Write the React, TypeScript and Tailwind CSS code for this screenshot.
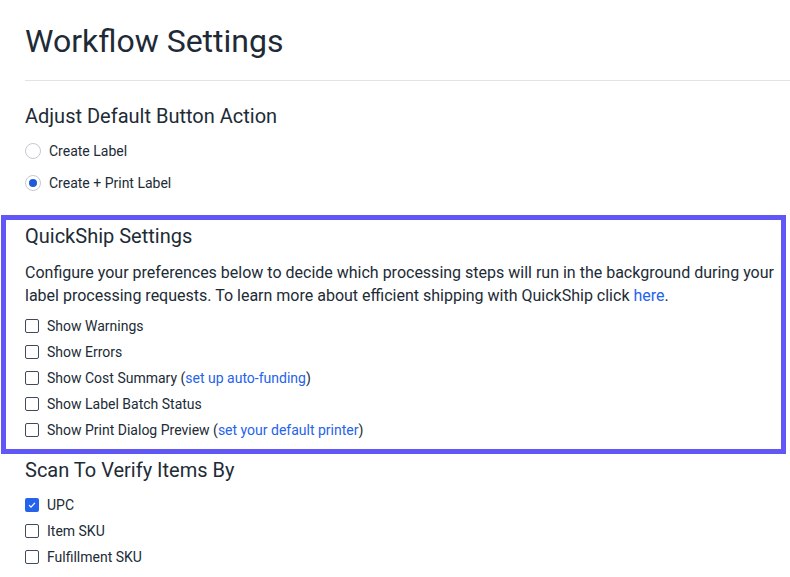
import React from "react";

const font = { fontFamily: "Roboto, 'Noto Sans', sans-serif" };

const Radio = ({ checked, label }: { checked?: boolean; label: string }) => (
  <label className="flex h-[32px] items-center">
    <span className="flex h-[16px] w-[16px] items-center justify-center rounded-full border border-[#c4cad3] bg-white">
      {checked && <span className="h-[8px] w-[8px] rounded-full bg-[#1f5bd8]" />}
    </span>
    <span className="ml-[8px] text-[14px] text-[#212b36]">{label}</span>
  </label>
);

const Check = ({ checked, children }: { checked?: boolean; children: React.ReactNode }) => (
  <label className="flex h-[26px] items-center">
    {checked ? (
      <span className="flex h-[14px] w-[14px] items-center justify-center rounded-[2px] bg-[#2563eb]">
        <svg viewBox="0 0 12 12" className="h-[10px] w-[10px]" fill="none" stroke="white" strokeWidth="1.5">
          <path d="M2.5 6.2l2.3 2.3 4.7-5" />
        </svg>
      </span>
    ) : (
      <span className="h-[14px] w-[14px] rounded-[2px] border border-[#3f4a5a] bg-white" />
    )}
    <span className="ml-[8px] text-[14px] text-[#212b36]">{children}</span>
  </label>
);

const Link = ({ children }: { children: React.ReactNode }) => (
  <a className="text-[#2563eb]">{children}</a>
);

export default function App() {
  return (
    <div className="min-h-screen w-[790px] overflow-hidden bg-white text-[#212b36]" style={font}>
      {/* page header */}
      <div className="pl-[25px] pt-[21px]">
        <h1 className="text-[32px] leading-[40px] font-normal text-[#1f2a37]">Workflow Settings</h1>
      </div>
      <div className="ml-[25px] mt-[19px] border-t border-[#dfe3e8]" />

      {/* default button action */}
      <div className="pl-[25px] pt-[21px]">
        <h2 className="text-[20px] leading-[28px] text-[#212b36]">Adjust Default Button Action</h2>
        <div className="mt-[5px]">
          <Radio label="Create Label" />
          <Radio checked label="Create + Print Label" />
        </div>
      </div>

      {/* quickship box */}
      <div className="ml-[1px] mt-[16px] w-[785px] border-[5px] border-[#6157f7] pl-[19px] pr-[4px] pt-[2px] pb-[6px]">
        <h2 className="text-[20px] leading-[28px]">QuickShip Settings</h2>
        <p className="mt-[11px] text-[16px] leading-[23px]">
          Configure your preferences below to decide which processing steps will run in the background during your
          label processing requests. To learn more about efficient shipping with QuickShip click <Link>here</Link>.
        </p>
        <div className="mt-[6px]">
          <Check>Show Warnings</Check>
          <Check>Show Errors</Check>
          <Check>
            Show Cost Summary (<Link>set up auto-funding</Link>)
          </Check>
          <Check>Show Label Batch Status</Check>
          <Check>
            Show Print Dialog Preview (<Link>set your default printer</Link>)
          </Check>
        </div>
      </div>

      {/* scan to verify */}
      <div className="pl-[25px] pt-[2px]">
        <h2 className="text-[20px] leading-[28px]">Scan To Verify Items By</h2>
        <div className="mt-[8px]">
          <Check checked>UPC</Check>
          <Check>Item SKU</Check>
          <Check>Fulfillment SKU</Check>
        </div>
      </div>
    </div>
  );
}
